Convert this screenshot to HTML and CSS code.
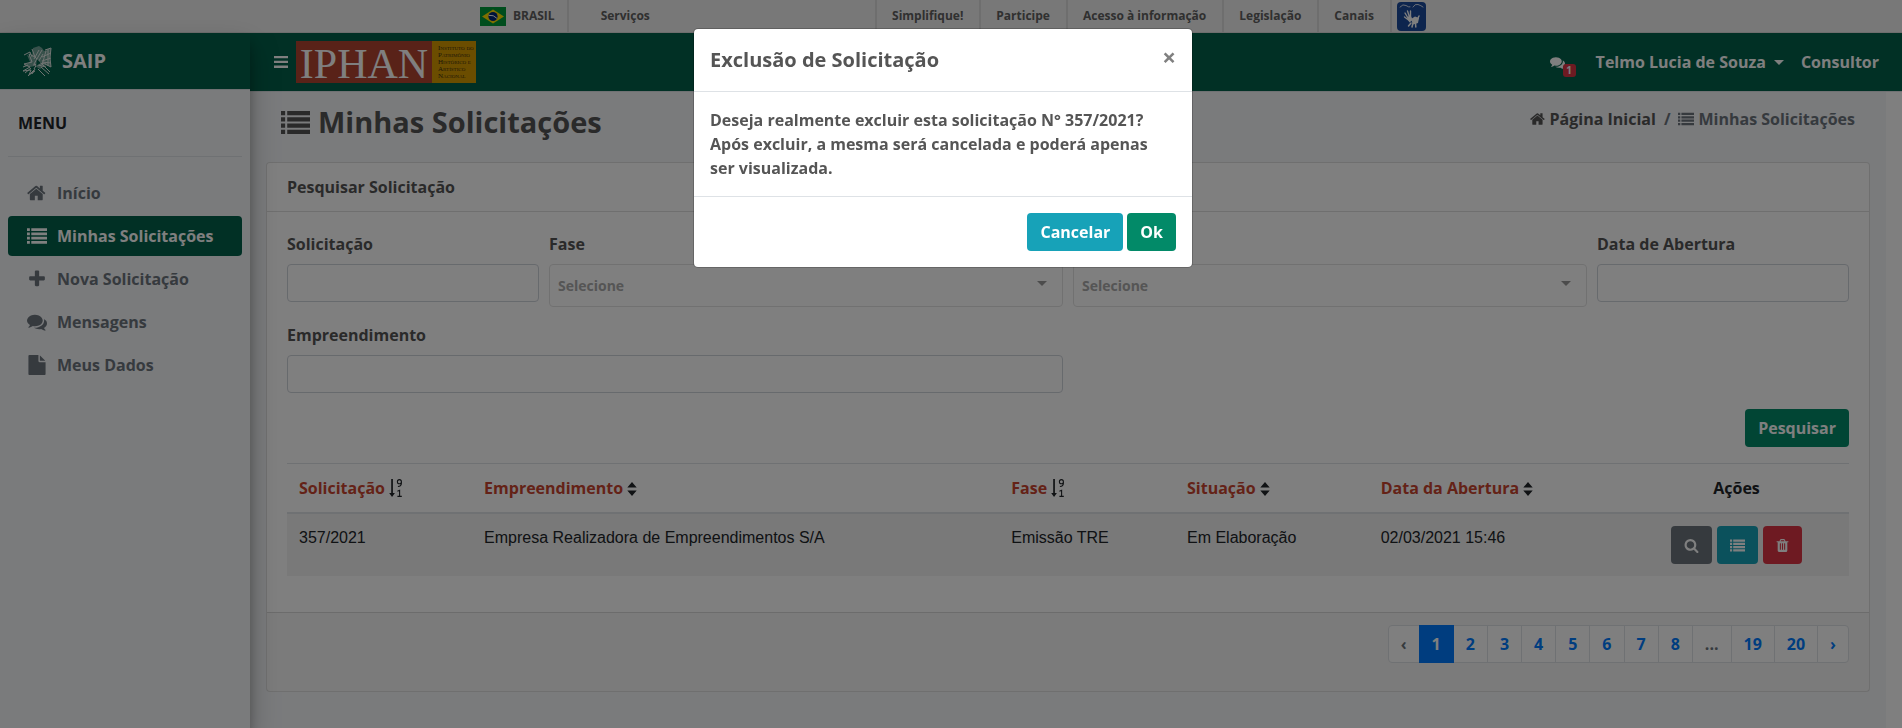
FILE: index.html
```html
<!DOCTYPE html>
<html lang="pt-BR">
<head>
<meta charset="utf-8">
<title>SAIP - Minhas Solicitações</title>
<link rel="stylesheet" href="styles.css">
</head>
<body>
<svg class="sprite" aria-hidden="true">
  <symbol id="i-home" viewBox="0 0 1792 1792"><path d="M1408 992v480q0 26-19 45t-45 19h-384v-384h-256v384h-384q-26 0-45-19t-19-45v-480q0-1 .5-3t.5-3l575-474 575 474q1 2 1 6zm223-69l-62 74q-8 9-21 11h-3q-13 0-21-7l-692-577-692 577q-12 8-24 7-13-2-21-11l-62-74q-8-10-7-23.500t11-21.500l719-599q32-26 76-26t76 26l244 204v-195q0-14 9-23t23-9h192q14 0 23 9t9 23v408l219 182q10 8 11 21.500t-7 23.500z"/></symbol>
  <symbol id="i-list" viewBox="0 0 1792 1792"><path d="M0 192h256v256H0zM0 576h256v256H0zM0 960h256v256H0zM0 1344h256v256H0zM384 192h1408v256H384zM384 576h1408v256H384zM384 960h1408v256H384zM384 1344h1408v256H384z"/></symbol>
  <symbol id="i-plus" viewBox="0 0 1792 1792"><path d="M1600 736v192q0 40-28 68t-68 28h-416v416q0 40-28 68t-68 28h-192q-40 0-68-28t-28-68v-416h-416q-40 0-68-28t-28-68v-192q0-40 28-68t68-28h416v-416q0-40 28-68t68-28h192q40 0 68 28t28 68v416h416q40 0 68 28t28 68z"/></symbol>
  <symbol id="i-comments" viewBox="0 0 1792 1792"><path d="M1408 768q0 139-94 257t-256.500 186.500-353.500 68.500q-86 0-176-16-124 88-278 128-36 9-86 16h-3q-11 0-20.500-8t-11.500-21q-1-3-1-6.500t.5-6.500 2-6l2.500-5 3.500-5.500 4-5 4.500-5 4-4.500q5-6 23-25t26-29.500 22.500-29 25-38.500 20.500-44q-124-72-195-177t-71-224q0-139 94-257t256.500-186.500 353.500-68.500 353.500 68.500 256.500 186.500 94 257zm384 256q0 120-71 224.500t-195 176.500q10 24 20.500 44t25 38.500 22.500 29 26 29.500 23 25q1 1 4 4.500t4.500 5 4 5 3.500 5.500l2.500 5 2 6 .5 6.500-1 6.500q-3 14-13 22t-22 7q-50-7-86-16-154-40-278-128-90 16-176 16-271 0-472-132 58 4 88 4 161 0 309-45t264-129q125-92 192-212t67-254q0-77-23-152 129 71 204 178t75 230z"/></symbol>
  <symbol id="i-file" viewBox="0 0 1792 1792"><path d="M1152 512v-472q22 14 36 28l408 408q14 14 28 36h-472zm-128 32q0 40 28 68t68 28h544v1056q0 40-28 68t-68 28h-1344q-40 0-68-28t-28-68v-1600q0-40 28-68t68-28h800v544z"/></symbol>
  <symbol id="i-search" viewBox="0 0 1792 1792"><path d="M1216 832q0-185-131.500-316.500t-316.500-131.500-316.500 131.500-131.500 316.500 131.500 316.500 316.500 131.500 316.500-131.500 131.500-316.500zm512 832q0 52-38 90t-90 38q-54 0-90-38l-343-342q-179 124-399 124-143 0-273.500-55.500t-225-150-150-225-55.500-273.500 55.500-273.500 150-225 225-150 273.500-55.500 273.500 55.500 225 150 150 225 55.500 273.500q0 220-124 399l343 343q37 37 37 90z"/></symbol>
  <symbol id="i-trash" viewBox="0 0 1792 1792"><path d="M704 1376v-704q0-14-9-23t-23-9h-64q-14 0-23 9t-9 23v704q0 14 9 23t23 9h64q14 0 23-9t9-23zm256 0v-704q0-14-9-23t-23-9h-64q-14 0-23 9t-9 23v704q0 14 9 23t23 9h64q14 0 23-9t9-23zm256 0v-704q0-14-9-23t-23-9h-64q-14 0-23 9t-9 23v704q0 14 9 23t23 9h64q14 0 23-9t9-23zm-544-992h448l-48-117q-7-9-17-11h-317q-10 2-17 11zm928 32v64q0 14-9 23t-23 9h-96v948q0 83-47 143.500t-113 60.500h-832q-66 0-113-58.500t-47-141.500v-952h-96q-14 0-23-9t-9-23v-64q0-14 9-23t23-9h309l70-167q15-37 54-63t79-26h320q40 0 79 26t54 63l70 167h309q14 0 23 9t9 23z"/></symbol>
  <symbol id="i-bars" viewBox="0 0 14 12"><path d="M0 0h14v2.300H0zM0 4.800h14v2.300H0zM0 9.600h14v2.300H0z"/></symbol>
  <symbol id="i-sort" viewBox="0 0 10 16"><path d="M5 1l4.700 5.500H.3zM5 15L.3 9.500h9.400z"/></symbol>
  <symbol id="i-sort-num" viewBox="0 0 14 18"><path d="M2.200 0h1.700v14h2L3.050 18 .2 14h2z"/><path d="M12.400 2.700a2 2.100 0 1 1-4 0a2 2.100 0 1 1 4 0v1.500q0 3-3.500 3.300M8.400 12.300l2.200-1v6M8.400 17.400h4.400" fill="none" stroke="currentColor" stroke-width="1.100"/></symbol>
</svg>

<div class="govbar">
  <div class="govbar-inner">
    <a class="gov-brand" href="#">
      <svg class="flag" viewBox="0 0 26 19" aria-hidden="true"><path fill="#009b3a" d="M0 0h26v19H0z"/><path fill="#fedf00" d="M13 2.500l11 7-11 7-11-7z"/><circle cx="13" cy="9.500" r="4.600" fill="#002776"/><path d="M8.700 8.300q5-.6 8.200 3" fill="none" stroke="#fff" stroke-width="1"/></svg>
      BRASIL</a>
    <a class="gov-services" href="#">Serviços</a>
    <nav class="gov-links">
      <a href="#">Simplifique!</a><a href="#">Participe</a><a href="#">Acesso à informação</a><a href="#">Legislação</a><a href="#">Canais</a>
      <a class="vlibras" href="#" aria-label="VLibras">
        <svg viewBox="0 0 29 29" aria-hidden="true"><rect width="29" height="29" rx="4" fill="#1a4a9c"/><g fill="none" stroke="#fff" stroke-linecap="round"><path d="M3 5q3-3.500 6-1.500t4 1.500M16 5q2-3.500 5-2.500t5 2.500" stroke-width=".8"/><path d="M8 11l3 5M10.500 9l2 6M13.500 9v6M7.500 15l4 3" stroke-width="1.400"/><path d="M20 18l2-4M14 21l-2.500 3M16 21l-1 4M18.500 21l.3 4" stroke-width="1.500"/></g><path d="M10.500 15q3-2 4 0l1 3-3 2.500q-2-2-2-5.500z" fill="#fff"/><path d="M14 17l4-2.500 4 1.500-1 5-5 1.500z" fill="#fff"/></svg>
      </a>
    </nav>
  </div>
</div>

<div class="app">
  <aside class="sidebar">
    <a class="brand" href="#">
      <svg class="crest" viewBox="0 0 32 32" aria-hidden="true"><g fill="none" stroke="#dfe6e3" stroke-width="1"><path d="M11 4l3 8-6-3 3 8-8 2 6 3-7 4 8-1-2 5 6-4M3 10l6-3 2 5M2 22l5-2M4 28l6-5M7 31l6-6M11 29l3-5M17 24l7 7M20 22l8 7M23 21l6 6M24 5l6-2-1 10 1 9-6-3M27 4v17M25 6l-4 14M21 5l-8 14 12 3M18 5l-5 9M30 8l-9 4M30 13l-9 3M30 18l-9-1M14 12l10 10M22 9l-9 15M12 20l13-2"/></g><path d="M12 3l3-1 3-1 3 2 2 3 5-2 2 0-1 9 1 9-5-2-6 4-5-3-5 1-6-1 6-4-3-7 5 2z" fill="#dfe6e3" opacity=".5"/><path d="M16 14l4 4-5 3z" fill="#02604a"/></svg>
      <span>SAIP</span></a>
    <div class="side-body">
      <div class="menu-title">MENU</div>
      <nav class="side-nav">
        <a href="#"><svg class="ico-side"><use href="#i-home"/></svg>Início</a>
        <a class="active" href="#"><svg class="ico-side"><use href="#i-list"/></svg>Minhas Solicitações</a>
        <a href="#"><svg class="ico-side"><use href="#i-plus"/></svg>Nova Solicitação</a>
        <a href="#"><svg class="ico-side"><use href="#i-comments"/></svg>Mensagens</a>
        <a href="#"><svg class="ico-side"><use href="#i-file"/></svg>Meus Dados</a>
      </nav>
    </div>
  </aside>

  <div class="main">
    <header class="navbar">
      <button class="toggle" type="button" aria-label="Menu"><svg><use href="#i-bars"/></svg></button>
      <a class="iphan" href="#"><span class="iphan-name">IPHAN</span><span class="iphan-full"><span>Instituto do</span><span>Patrimônio</span><span>Histórico e</span><span>Artístico</span><span>Nacional</span></span></a>
      <a class="messages" href="#" aria-label="Mensagens"><svg><use href="#i-comments"/></svg><span class="badge">1</span></a>
      <a class="user" href="#">Telmo Lucia de Souza</a>
      <a class="role" href="#">Consultor</a>
    </header>

    <div class="content">
      <div class="page-head">
        <h1><svg><use href="#i-list"/></svg>Minhas Solicitações</h1>
        <nav class="crumbs"><a href="#"><svg><use href="#i-home"/></svg>Página Inicial</a><span class="slash">/</span><span class="here"><svg><use href="#i-list"/></svg>Minhas Solicitações</span></nav>
      </div>

      <section class="card">
        <div class="card-head">Pesquisar Solicitação</div>
        <div class="card-body">
          <form class="filters">
            <div class="c2"><label for="sol">Solicitação</label><input id="sol" type="text"></div>
            <div class="c4"><label for="fase">Fase</label><div class="pick"><select id="fase"><option>Selecione</option></select></div></div>
            <div class="c4 bottom"><div class="pick"><select aria-label="Situação"><option>Selecione</option></select></div></div>
            <div class="c2"><label for="data">Data de Abertura</label><input id="data" type="text"></div>
            <div class="c6"><label for="emp">Empreendimento</label><input id="emp" type="text"></div>
            <div class="c12"><button class="btn green" type="button">Pesquisar</button></div>
          </form>
          <table>
            <thead><tr>
              <th class="w1"><a href="#">Solicitação</a> <svg class="num"><use href="#i-sort-num"/></svg></th>
              <th class="w2"><a href="#">Empreendimento</a> <svg class="sort"><use href="#i-sort"/></svg></th>
              <th class="w3"><a href="#">Fase</a> <svg class="num"><use href="#i-sort-num"/></svg></th>
              <th class="w4"><a href="#">Situação</a> <svg class="sort"><use href="#i-sort"/></svg></th>
              <th class="w5"><a href="#">Data da Abertura</a> <svg class="sort"><use href="#i-sort"/></svg></th>
              <th class="w6">Ações</th>
            </tr></thead>
            <tbody><tr>
              <td>357/2021</td><td>Empresa Realizadora de Empreendimentos S/A</td><td>Emissão TRE</td><td>Em Elaboração</td><td>02/03/2021 15:46</td>
              <td><div class="actions">
                <button class="btn gray" type="button" aria-label="Visualizar"><svg><use href="#i-search"/></svg></button>
                <button class="btn teal" type="button" aria-label="Detalhes"><svg><use href="#i-list"/></svg></button>
                <button class="btn red" type="button" aria-label="Excluir"><svg><use href="#i-trash"/></svg></button>
              </div></td>
            </tr></tbody>
          </table>
        </div>
        <div class="card-foot">
          <nav class="pages">
            <span>‹</span><a class="on" href="#">1</a><a href="#">2</a><a href="#">3</a><a href="#">4</a><a href="#">5</a><a href="#">6</a><a href="#">7</a><a href="#">8</a><span>...</span><a href="#">19</a><a href="#">20</a><a href="#">›</a>
          </nav>
        </div>
      </section>
    </div>
  </div>
</div>

<div class="backdrop">
  <div class="modal" role="dialog" aria-modal="true" aria-labelledby="mt">
    <div class="modal-head"><h4 id="mt">Exclusão de Solicitação</h4><button class="close" type="button" aria-label="Fechar">×</button></div>
    <p class="modal-body">Deseja realmente excluir esta solicitação N° 357/2021? Após excluir, a mesma será cancelada e poderá apenas ser visualizada.</p>
    <div class="modal-foot"><button class="btn teal" type="button">Cancelar</button><button class="btn green" type="button">Ok</button></div>
  </div>
</div>
</body>
</html>
```

FILE: styles.css
```css
* { box-sizing: border-box; }
body {
  margin: 0;
  min-height: 100vh;
  display: flex;
  flex-direction: column;
  font: 700 16px/24px "Open Sans", sans-serif;
  color: #555;
  background: #fff;
  overflow: hidden;
}
a { color: inherit; text-decoration: none; }
h1, h4, p { margin: 0; }
svg { fill: currentColor; }
button, input, select { font: inherit; }
.sprite { position: absolute; width: 0; height: 0; }

/* government bar */
.govbar { height: 33px; background: #f1f1f1; border-bottom: 1px solid #ddd; font-size: 12px; line-height: 16px; color: #606060; }
.govbar-inner { max-width: 952px; height: 32px; margin: 0 auto; padding-left: 5px; display: flex; }
.gov-brand { display: flex; align-items: center; gap: 7px; padding-right: 12px; border-right: 2px solid #ddd; }
.flag { width: 26px; height: 19px; }
.gov-services { padding: 8px 32px; }
.gov-links { display: flex; margin-left: auto; }
.gov-links a { padding: 8px 16px 8px 15px; border-left: 2px solid #ddd; }
.gov-links .vlibras { padding: 2px 1px 0 5px; }
.vlibras svg { display: block; width: 29px; height: 29px; }

.app { flex: 1; display: flex; }

/* sidebar */
.sidebar { width: 250px; flex: none; background: #f4f6f9; z-index: 2; box-shadow: 0 14px 28px rgba(0,0,0,.25), 0 10px 10px rgba(0,0,0,.22); }
.brand { display: flex; align-items: center; gap: 9px; height: 57px; padding: 0 21px; background: #02604a; border-bottom: 1px solid #dee2e6; color: #fff; font-size: 20px; }
.crest { width: 32px; height: 32px; }
.side-body { padding: 0 8px; }
.menu-title { padding: 21px 10px; border-bottom: 1px solid #dee2e6; color: #212529; }
.side-nav { display: flex; flex-direction: column; gap: 3px; padding-top: 16px; }
.side-nav a { display: flex; align-items: center; gap: 10px; height: 40px; padding: 0 19px; border-radius: 4px; color: #6c757d; }
.side-nav a.active { background: #02604a; color: #fff; }
.ico-side { width: 20px; height: 20px; }

/* top bar */
.main { flex: 1; min-width: 0; display: flex; flex-direction: column; }
.navbar { height: 59px; flex: none; display: flex; align-items: center; padding: 0 23px 0 24px; background: #02604a; border-bottom: 1px solid #dee2e6; color: #fff; }
.toggle { border: 0; padding: 0; margin-right: 8px; background: none; color: #fff; display: flex; }
.toggle svg { width: 14px; height: 12px; }
.iphan { display: flex; height: 42px; }
.iphan-name { width: 136px; background: #b34530; font: 400 42px/46px "Liberation Serif", serif; text-align: center; }
.iphan-full { width: 44px; background: #d79a00; color: #3c3010; font: 400 7px/7px "Liberation Serif", serif; font-variant: small-caps; display: flex; flex-direction: column; justify-content: center; padding-left: 6px; white-space: nowrap; }
.messages { margin-left: auto; position: relative; width: 26px; height: 24px; display: flex; align-items: center; }
.messages svg { width: 15px; height: 15px; }
.badge { position: absolute; left: 13px; top: 14px; width: 13px; height: 13px; border-radius: 3px; background: #dc3545; font-size: 10px; line-height: 13px; text-align: center; }
.user { margin: 0 17px 0 20px; display: flex; align-items: center; gap: 8px; }
.user::after, .pick::after { content: ""; border: 5px solid transparent; border-top-color: currentColor; border-bottom: 0; }

/* content */
.content { flex: 1; margin-right: 16px; padding: 0 16px; background: #f4f6f9; }
.page-head { display: flex; justify-content: space-between; padding: 12px 15px 0; height: 70px; }
h1 { display: flex; align-items: center; gap: 8px; height: 36px; font-size: 29px; line-height: 36px; }
h1 svg { width: 29px; height: 29px; }
.crumbs { display: flex; align-items: center; height: 30px; }
.crumbs svg { width: 16px; height: 16px; margin-right: 4px; vertical-align: -2px; }
.slash { padding: 0 8px; color: #6c757d; }
.here { color: #6c757d; }
.card { background: #fff; border: 1px solid rgba(0,0,0,.125); border-radius: 4px; }
.card-head { padding: 12px 20px; border-bottom: 1px solid rgba(0,0,0,.125); }
.card-body { padding: 20px; }
.card-foot { padding: 12px 20px 28px; background: rgba(0,0,0,.03); border-top: 1px solid rgba(0,0,0,.125); display: flex; justify-content: flex-end; }

.filters { display: grid; grid-template-columns: repeat(12, 1fr); gap: 16px 10px; margin-bottom: 16px; align-items: start; }
.c2 { grid-column: span 2; }
.c4 { grid-column: span 4; }
.c6 { grid-column: span 6; }
.c12 { grid-column: span 12; display: flex; justify-content: flex-end; }
.bottom { align-self: end; }
label { display: block; margin-bottom: 8px; }
.filters input { display: block; width: 100%; height: 38px; border: 1px solid #ced4da; border-radius: 4px; background: #fff; padding: 6px 12px; }
.pick { position: relative; color: #999; }
.pick::after { position: absolute; right: 16px; top: 17px; }
.pick select { display: block; appearance: none; width: 100%; height: 43px; border: 1px solid #e3e3e3; border-radius: 4px; background: #fff; padding: 0 8px; font-size: 14px; color: #aaa; }

.btn { height: 38px; padding: 0 13px; border: 0; border-radius: 4px; color: #fff; }
.green { background: #028a68; }
.teal { background: #17a2b8; }
.gray { background: #6c757d; }
.red { background: #dc3545; }

table { width: 100%; table-layout: fixed; border-collapse: separate; border-spacing: 0; color: #212529; margin-bottom: 16px; }
th { padding: 12px; border-top: 1px solid #dee2e6; border-bottom: 2px solid #dee2e6; text-align: left; }
th a { color: #c9452f; }
th svg { vertical-align: -3px; }
.sort { width: 10px; height: 16px; }
.num { width: 14px; height: 18px; }
.w1 { width: 11.85%; }
.w2 { width: 33.75%; }
.w3 { width: 11.25%; }
.w4 { width: 12.4%; }
.w5 { width: 16.35%; }
.w6 { width: 14.4%; text-align: center; }
td { padding: 12px; vertical-align: top; background: rgba(0,0,0,.05); font-family: "Liberation Sans", Arial, sans-serif; font-weight: 400; }
.actions { display: flex; justify-content: center; gap: 5px; }
.actions svg { display: block; width: 15px; height: 15px; }
.actions .red { padding: 0 12px; }

.pages { display: flex; line-height: 20px; }
.pages > * { padding: 8px 12px; margin-left: -1px; border: 1px solid #dee2e6; background: #fff; color: #007bff; }
.pages > span { color: #6c757d; }
.pages > :first-child { border-radius: 4px 0 0 4px; }
.pages > :last-child { border-radius: 0 4px 4px 0; }
.pages .on { background: #007bff; border-color: #007bff; color: #fff; z-index: 1; }

/* dialog */
.backdrop { position: fixed; inset: 0; z-index: 10; background: rgba(0,0,0,.5); padding: 28px 16px 0 0; }
.modal { max-width: 500px; margin: 0 auto; background: #fff; background-clip: padding-box; border: 1px solid rgba(0,0,0,.2); border-radius: 5px; }
.modal-head { display: flex; justify-content: space-between; align-items: flex-start; padding: 16px; border-bottom: 1px solid #dee2e6; }
h4 { font-size: 20px; line-height: 30px; }
.close { border: 0; padding: 0; background: none; color: #808080; font-size: 24px; line-height: 24px; }
.modal-body { padding: 16px; }
.modal-foot { display: flex; justify-content: flex-end; gap: 4px; padding: 16px; border-top: 1px solid #dee2e6; }
```
